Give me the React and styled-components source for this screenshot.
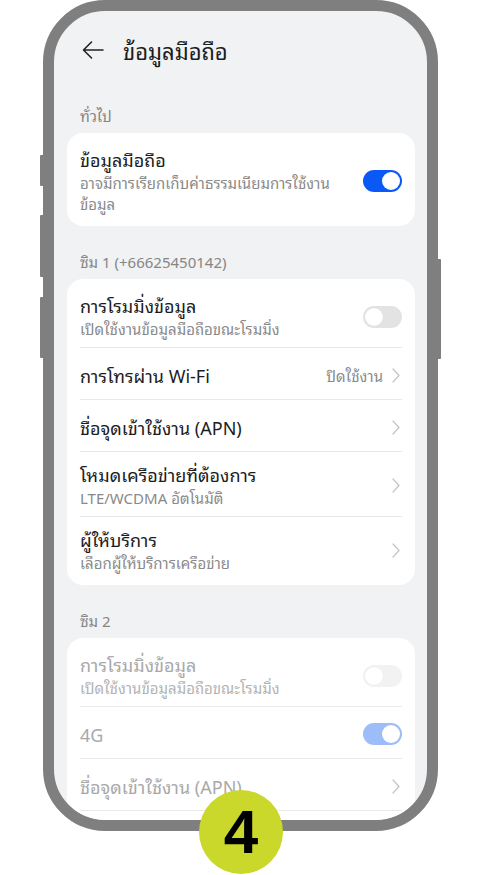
import styled, { createGlobalStyle } from 'styled-components';

const GlobalStyle = createGlobalStyle`
  html, body {
    margin: 0;
    padding: 0;
    background: #ffffff;
  }
  body {
    font-family: "Noto Sans Thai Looped", "Noto Sans Thai", "Noto Sans", "Liberation Sans", sans-serif;
    -webkit-font-smoothing: antialiased;
  }
`;

const sim1 = [
  { title: 'การโรมมิ่งข้อมูล', sub: 'เปิดใช้งานข้อมูลมือถือขณะโรมมิ่ง', toggle: 'off' },
  { title: 'การโทรผ่าน Wi-Fi', value: 'ปิดใช้งาน', chevron: true },
  { title: 'ชื่อจุดเข้าใช้งาน (APN)', chevron: true },
  { title: 'โหมดเครือข่ายที่ต้องการ', sub: 'LTE/WCDMA อัตโนมัติ', chevron: true },
  { title: 'ผู้ให้บริการ', sub: 'เลือกผู้ให้บริการเครือข่าย', chevron: true },
];

const sim2 = [
  { title: 'การโรมมิ่งข้อมูล', sub: 'เปิดใช้งานข้อมูลมือถือขณะโรมมิ่ง', toggle: 'off' },
  { title: '4G', toggle: 'on' },
  { title: 'ชื่อจุดเข้าใช้งาน (APN)', chevron: true },
  { title: 'โหมดเครือข่ายที่ต้องการ', sub: 'LTE/WCDMA อัตโนมัติ', chevron: true },
];

const Chevron = () => (
  <ChevronIcon width="8" height="15" viewBox="0 0 8 15">
    <path d="M1 1 L7 7.5 L1 14" fill="none" stroke="#c4c4c4" strokeWidth="1.2" strokeLinecap="round" strokeLinejoin="round" />
  </ChevronIcon>
);

const SettingRow = ({ item, disabled }) => (
  <Row>
    <RowText>
      <RowTitle $disabled={disabled}>{item.title}</RowTitle>
      {item.sub && <RowSub $disabled={disabled}>{item.sub}</RowSub>}
    </RowText>
    {item.value && <RowValue>{item.value}</RowValue>}
    {item.toggle && <Toggle $on={item.toggle === 'on'} $disabled={disabled} />}
    {item.chevron && <Chevron />}
  </Row>
);

const App = () => {
  return (
    <Page>
      <GlobalStyle />
      <PhoneWrap>
        <SideButton $side="left" $top={155} $h={31} />
        <SideButton $side="left" $top={215} $h={62} />
        <SideButton $side="left" $top={297} $h={61} />
        <SideButton $side="right" $top={259} $h={100} />
        <Phone>
          <Screen>
            <Header>
              <BackIcon width="22" height="18" viewBox="0 0 22 18">
                <path d="M21 9 H1.5 M9.5 1 L1.5 9 L9.5 17" fill="none" stroke="#222" strokeWidth="1.6" strokeLinecap="round" strokeLinejoin="round" />
              </BackIcon>
              <HeaderTitle>ข้อมูลมือถือ</HeaderTitle>
            </Header>

            <SectionLabel>ทั่วไป</SectionLabel>
            <Card>
              <Row>
                <RowText>
                  <RowTitle>ข้อมูลมือถือ</RowTitle>
                  <RowSub>อาจมีการเรียกเก็บค่าธรรมเนียมการใช้งานข้อมูล</RowSub>
                </RowText>
                <Toggle $on />
              </Row>
            </Card>

            <SectionLabel>ซิม 1 (+66625450142)</SectionLabel>
            <Card>
              {sim1.map((item) => (
                <SettingRow key={item.title} item={item} />
              ))}
            </Card>

            <SectionLabel>ซิม 2</SectionLabel>
            <Card>
              {sim2.map((item) => (
                <SettingRow key={item.title} item={item} disabled />
              ))}
            </Card>
          </Screen>
        </Phone>
      </PhoneWrap>
      <StepBadge>4</StepBadge>
    </Page>
  );
};

export default App;

const Page = styled.div`
  position: relative;
  width: 482px;
  height: 875px;
  overflow: hidden;
  background: #ffffff;
`;

const PhoneWrap = styled.div`
  position: relative;
  margin-left: 43px;
  width: 395px;
  height: 831px;
`;

const SideButton = styled.div`
  position: absolute;
  top: ${p => p.$top}px;
  height: ${p => p.$h}px;
  width: 4px;
  background: #7f7f7f;
  border-radius: 1px;
  ${p => (p.$side === 'left' ? 'left: -3px;' : 'right: -3px;')}
`;

const Phone = styled.div`
  box-sizing: border-box;
  width: 100%;
  height: 100%;
  border: 11px solid #7f7f7f;
  border-radius: 62px;
  overflow: hidden;
  background: #f1f2f4;
`;

const Screen = styled.div`
  height: 100%;
  overflow: hidden;
  padding: 0 12px 0 13px;
  border-radius: 51px;
`;

const Header = styled.div`
  display: flex;
  align-items: center;
  height: 78px;
  padding-left: 15px;
`;

const BackIcon = styled.svg`
  display: block;
  flex-shrink: 0;
  margin-right: 19px;
`;

const HeaderTitle = styled.h1`
  margin: 0;
  font-size: 22px;
  font-weight: 400;
  color: #1c1c1c;
  line-height: 30px;
`;

const SectionLabel = styled.div`
  padding: 25px 13px 8px;
  font-size: 15px;
  line-height: 20px;
  color: #868686;

  ${Header} + & {
    padding-top: 16px;
  }
`;

const Card = styled.div`
  background: #ffffff;
  border-radius: 16px;
  padding: 4px 0;
`;

const Row = styled.div`
  box-sizing: border-box;
  display: flex;
  align-items: center;
  min-height: 52px;
  margin: 0 13px;
  padding: 11px 0 8px;

  & + & {
    border-top: 1px solid #e9e9e9;
  }
`;

const RowText = styled.div`
  flex: 1;
  min-width: 0;
  padding-right: 24px;
`;

const RowTitle = styled.div`
  font-size: 18px;
  line-height: 22px;
  color: ${p => (p.$disabled ? '#a9a9a9' : '#1d1d1d')};
`;

const RowSub = styled.div`
  margin-top: 2px;
  font-size: 15px;
  line-height: 21px;
  color: ${p => (p.$disabled ? '#b3b3b3' : '#8a8a8a')};
`;

const RowValue = styled.div`
  margin-right: 9px;
  font-size: 15px;
  line-height: 20px;
  color: #8a8a8a;
  white-space: nowrap;
`;

const ChevronIcon = styled.svg`
  display: block;
  flex-shrink: 0;
  margin-right: 2px;
`;

const trackColor = p => {
  if (p.$on) return p.$disabled ? '#9dbdf9' : '#0a59f7';
  return p.$disabled ? '#f2f2f2' : '#e3e3e3';
};

const Toggle = styled.div`
  position: relative;
  flex-shrink: 0;
  width: 39px;
  height: 22px;
  border-radius: 11px;
  background: ${trackColor};

  &::after {
    content: '';
    position: absolute;
    top: 2px;
    left: ${p => (p.$on ? '19px' : '2px')};
    width: 18px;
    height: 18px;
    border-radius: 50%;
    background: #ffffff;
    box-shadow: ${p => (p.$on ? 'none' : '0 0 1px rgba(0, 0, 0, 0.08)')};
  }
`;

const StepBadge = styled.div`
  position: absolute;
  left: 199px;
  top: 790px;
  width: 84px;
  height: 84px;
  border-radius: 50%;
  background: #c9d82b;
  display: flex;
  align-items: center;
  justify-content: center;
  font-family: "Liberation Sans", Arial, sans-serif;
  font-weight: 700;
  font-size: 62px;
  line-height: 1;
  color: #000000;
`;
